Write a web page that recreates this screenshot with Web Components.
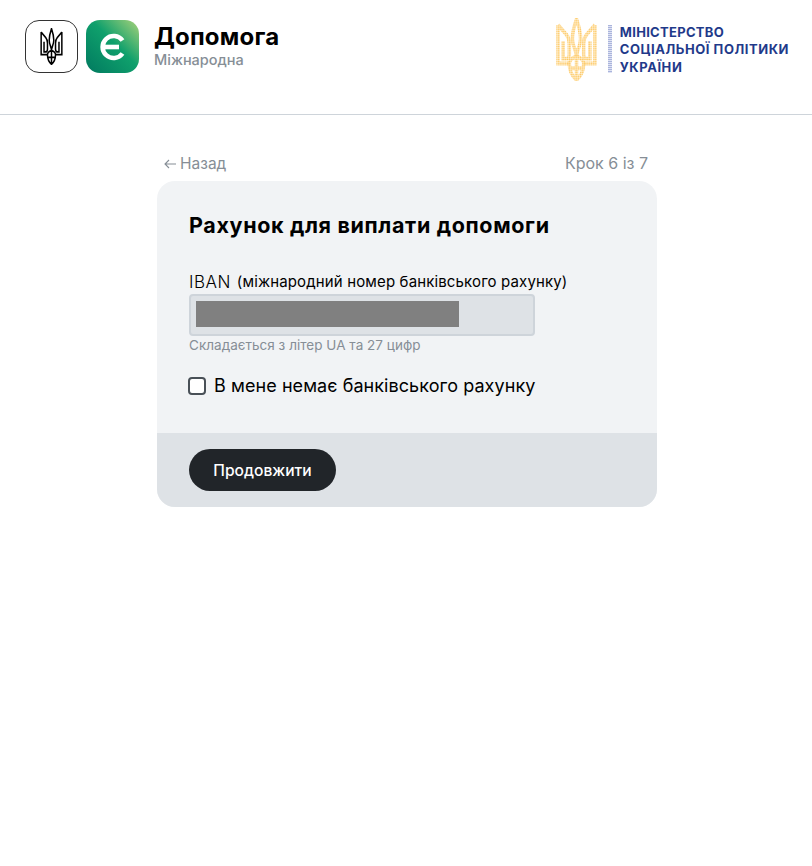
<!DOCTYPE html>
<html lang="uk">
<head>
<meta charset="utf-8">
<title>Допомога</title>
<style>
    html, body { margin: 0; background: #fff; }
    body { font-family: Inter, "Noto Sans", sans-serif; color: #000; }
</style>
</head>
<body>
<site-header></site-header>
<page-body>
    <step-nav back="Назад" step="Крок 6 із 7"></step-nav>
    <form-card heading="Рахунок для виплати допомоги">
        <iban-field hint="Складається з літер UA та 27 цифр"></iban-field>
        <check-row>В мене немає банківського рахунку</check-row>
        <main-button slot="footer">Продовжити</main-button>
    </form-card>
</page-body>

<script>
// Same trident outline is used by both coats of arms
const TRIDENT = `
    <path d="M20 1C18 6 16 12 16 18C16 24 20 28 20 33C20 28 24 24 24 18C24 12 22 6 20 1Z"/>
    <path d="M2 6V39H13M2 6L10 14C12 16 13 18 13 22V31C13 34 12 35 9 35H7V20"/>
    <path d="M38 6V39H27M38 6L30 14C28 16 27 18 27 22V31C27 34 28 35 31 35H33V20"/>
    <path d="M20 33C16 34 13 36 13 39C13 45 16 50 20 53C24 50 27 45 27 39C27 36 24 34 20 33M13 43H27M20 33V53"/>
`;

/**
 * Top bar with the service logos and the ministry logo
 */
class SiteHeader extends HTMLElement {
    constructor() {
        super();
        const shadow = this.attachShadow({mode: "open"});
        shadow.innerHTML = `
            <style>
                :host {
                    display: flex;
                    justify-content: space-between;
                    height: 114px;
                    border-bottom: 1px solid #ced4da;
                    font-family: Inter, "Noto Sans", sans-serif;
                }
                .brand {
                    display: flex;
                    align-items: flex-start;
                    padding: 20px 0 0 25px;
                }
                .tile {
                    box-sizing: border-box;
                    display: flex;
                    align-items: center;
                    justify-content: center;
                    width: 53px;
                    height: 53px;
                    border-radius: 14px;
                }
                .arms { border: 1px solid #333; margin-right: 8px; }
                .green { background: linear-gradient(45deg, #01795f 0%, #0fa06c 55%, #a8d27a 100%); margin-right: 15px; }
                .names { padding-top: 3px; }
                .title { font-size: 24px; line-height: 28px; font-weight: 700; letter-spacing: 0.2px; }
                .sub { font-size: 14.5px; line-height: 18px; font-weight: 500; color: #868e96; }
                .ministry {
                    display: flex;
                    align-items: flex-start;
                    padding: 18px 23px 0 0;
                }
                .bar {
                    width: 4px;
                    height: 48px;
                    margin: 7px 8px 0 11px;
                    background: repeating-linear-gradient(#aab4dc 0 1px, #dfe3f3 1px 2px);
                }
                .org {
                    padding-top: 6px;
                    font-size: 13px;
                    line-height: 17.4px;
                    font-weight: 700;
                    letter-spacing: 0.55px;
                    color: #1f3a8a;
                    white-space: nowrap;
                }
                .org span { letter-spacing: 0.3px; }
            </style>
            <div class="brand">
                <div class="tile arms">
                    <svg width="23" height="37" viewBox="0 0 40 54" fill="none" stroke="#000" stroke-width="2.6" preserveAspectRatio="none">${TRIDENT}</svg>
                </div>
                <div class="tile green">
                    <svg width="30" height="30" viewBox="0 0 30 30" fill="none" stroke="#fff" stroke-width="4.6">
                        <path d="M24.5 8.5A11 11 0 1 0 24.5 21.5"/>
                        <path d="M6 15h15"/>
                    </svg>
                </div>
                <div class="names">
                    <div class="title">Допомога</div>
                    <div class="sub">Міжнародна</div>
                </div>
            </div>
            <div class="ministry">
                <svg width="41" height="63" viewBox="0 0 40 54" fill="none" preserveAspectRatio="none">
                    <defs>
                        <pattern id="dots" width="1.8" height="1.6" patternUnits="userSpaceOnUse">
                            <rect width="1.4" height="1.2" fill="#fdc75f"/>
                        </pattern>
                    </defs>
                    <g stroke="url(#dots)" stroke-width="3.4">${TRIDENT}</g>
                </svg>
                <div class="bar"></div>
                <div class="org"><span>МІНІСТЕРСТВО</span><br>СОЦІАЛЬНОЇ ПОЛІТИКИ<br>УКРАЇНИ</div>
            </div>
        `;
    }
}

/**
 * Centered 500px column below the header
 */
class PageBody extends HTMLElement {
    constructor() {
        super();
        const shadow = this.attachShadow({mode: "open"});
        shadow.innerHTML = `
            <style>
                :host {
                    display: block;
                    width: 500px;
                    margin: 0 0 0 157px;
                    padding-top: 38px;
                }
            </style>
            <slot></slot>
        `;
    }
}

/**
 * Back link on the left, step counter on the right
 */
class StepNav extends HTMLElement {
    constructor() {
        super();
        const shadow = this.attachShadow({mode: "open"});
        shadow.innerHTML = `
            <style>
                :host {
                    display: flex;
                    justify-content: space-between;
                    height: 28px;
                    padding: 0 9px 0 7px;
                    font-size: 16px;
                    line-height: 21px;
                    color: #868e96;
                }
                .back { display: flex; align-items: center; height: 21px; gap: 4px; font-size: 15.5px; }
            </style>
            <div class="back">
                <svg width="12" height="10" viewBox="0 0 12 10" fill="none" stroke="#868e96" stroke-width="1.1">
                    <path d="M12 5H1M5 1L1 5l4 4"/>
                </svg>
                <span>${this.getAttribute('back')}</span>
            </div>
            <div>${this.getAttribute('step')}</div>
        `;
    }
}

/**
 * Rounded grey card with a heading, body and a darker footer
 */
class FormCard extends HTMLElement {
    constructor() {
        super();
        const shadow = this.attachShadow({mode: "open"});
        shadow.innerHTML = `
            <style>
                :host {
                    display: block;
                    border-radius: 18px;
                    overflow: hidden;
                    background: #f1f3f5;
                }
                .main { height: 252px; box-sizing: border-box; padding: 31px 32px 0; }
                h1 {
                    margin: 0 0 32px;
                    font-size: 21.5px;
                    line-height: 26px;
                    font-weight: 700;
                    letter-spacing: 0.65px;
                }
                .foot {
                    height: 74px;
                    box-sizing: border-box;
                    padding: 16px 32px 0;
                    background: #dee2e6;
                }
            </style>
            <div class="main">
                <h1>${this.getAttribute('heading')}</h1>
                <slot></slot>
            </div>
            <div class="foot"><slot name="footer"></slot></div>
        `;
    }
}

/**
 * IBAN label, input with the masked value, and hint
 */
class IbanField extends HTMLElement {
    constructor() {
        super();
        const shadow = this.attachShadow({mode: "open"});
        shadow.innerHTML = `
            <style>
                :host { display: block; }
                .label { display: flex; gap: 6px; font-size: 17px; line-height: 22px; padding-top: 1px; height: 21px; white-space: nowrap; font-weight: 300; letter-spacing: 0.5px; }
                .label small { font-size: 15px; letter-spacing: 0.14px; font-weight: 400; }
                .input {
                    box-sizing: border-box;
                    width: 346px;
                    height: 42px;
                    padding: 5px;
                    margin-top: 2px;
                    border: 2px solid #ced4da;
                    border-radius: 4px;
                    background: #dee2e6;
                }
                .mask { width: 263px; height: 26px; background: #808080; }
                .hint { margin-top: 1px; font-size: 13.5px; line-height: 16px; letter-spacing: 0.03px; color: #868e96; }
            </style>
            <div class="label"><span>IBAN</span><small>(міжнародний номер банківського рахунку)</small></div>
            <div class="input"><div class="mask"></div></div>
            <div class="hint">${this.getAttribute('hint')}</div>
        `;
    }
}

/**
 * Unchecked checkbox and its label
 */
class CheckRow extends HTMLElement {
    constructor() {
        super();
        const shadow = this.attachShadow({mode: "open"});
        shadow.innerHTML = `
            <style>
                :host {
                    display: flex;
                    align-items: center;
                    gap: 8px;
                    margin: 21px 0 0 -1px;
                    font-size: 18px;
                    line-height: 24px;
                    letter-spacing: 0.07px;
                }
                .box {
                    box-sizing: border-box;
                    width: 18px;
                    height: 18px;
                    border: 2px solid #495057;
                    border-radius: 4px;
                    background: #fff;
                }
            </style>
            <div class="box"></div>
            <slot></slot>
        `;
    }
}

/**
 * Dark pill button
 */
class MainButton extends HTMLElement {
    constructor() {
        super();
        const shadow = this.attachShadow({mode: "open"});
        shadow.innerHTML = `
            <style>
                :host {
                    display: inline-flex;
                    align-items: center;
                    justify-content: center;
                    width: 147px;
                    height: 42px;
                    border-radius: 21px;
                    background: #212529;
                    color: #fff;
                    font-size: 15.6px;
                    font-weight: 500;
                }
            </style>
            <slot></slot>
        `;
    }
}

customElements.define('site-header', SiteHeader);
customElements.define('page-body', PageBody);
customElements.define('step-nav', StepNav);
customElements.define('form-card', FormCard);
customElements.define('iban-field', IbanField);
customElements.define('check-row', CheckRow);
customElements.define('main-button', MainButton);
</script>
</body>
</html>
